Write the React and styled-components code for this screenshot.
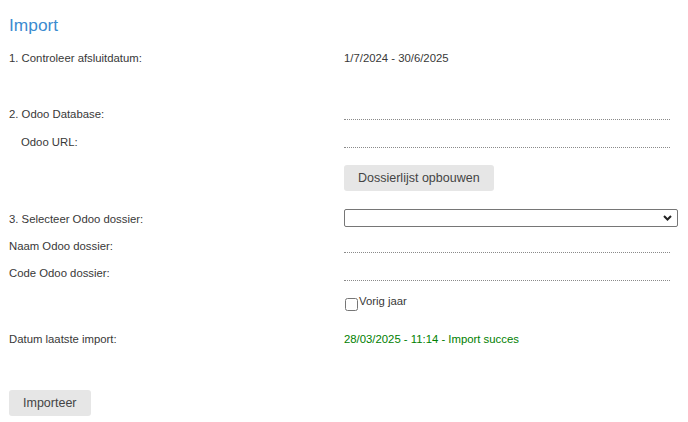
import React, { useState } from 'react';
import styled, { createGlobalStyle } from 'styled-components';

const GlobalStyle = createGlobalStyle`
  body {
    margin: 0;
    background: #fff;
    font-family: "Liberation Sans", Arial, sans-serif;
    font-size: 8.5pt;
    color: #383838;
  }
`;

const Page = styled.div`
  padding: 13px 9px 0;
  display: flex;
  flex-direction: column;
`;

const Title = styled.h2`
  margin: 0;
  font-size: 13pt;
  font-weight: normal;
  line-height: 24px;
  color: #3b8bd0;
`;

const Row = styled.div`
  display: grid;
  grid-template-columns: 335px 334px;
  align-items: start;
  margin-top: ${(p) => p.$mt || 0}px;
`;

const Label = styled.div`
  line-height: 16px;
  padding-left: ${(p) => (p.$indent ? 12 : 0)}px;
  padding-top: ${(p) => p.$pt || 0}px;
`;

const Value = styled.div`
  line-height: 16px;
  color: ${(p) => (p.$success ? 'green' : '#383838')};
`;

const Field = styled.input`
  box-sizing: border-box;
  width: 326px;
  height: ${(p) => p.$h || 15}px;
  padding: 0;
  border: none;
  border-bottom: 1px dotted #8a8a8a;
  font: inherit;
  color: #333;
  background: transparent;
  outline: none;
`;

const Button = styled.button`
  height: 26px;
  padding: 0 14px;
  border: none;
  border-radius: 3px;
  background: #e6e6e6;
  color: #444;
  font-family: "Liberation Sans", Arial, sans-serif;
  font-size: 12.5px;
  cursor: pointer;
  justify-self: start;

  &:hover {
    background: #dcdcdc;
  }
`;

const SelectWrap = styled.div`
  position: relative;
  width: 334px;
  height: 18px;
`;

const Select = styled.select`
  appearance: none;
  box-sizing: border-box;
  width: 100%;
  height: 100%;
  margin: 0;
  padding: 0 20px 0 3px;
  border: 1px solid #767676;
  border-radius: 2px;
  background: #fff;
  font: inherit;
  color: #333;
`;

const Chevron = styled.svg`
  position: absolute;
  right: 6px;
  top: 6px;
  pointer-events: none;
`;

const CheckLabel = styled.label`
  display: flex;
  align-items: flex-start;
  line-height: 16px;
`;

const Check = styled.input`
  width: 13px;
  height: 13px;
  margin: 5px 1px 0 1px;
`;

const ImportButton = styled(Button)`
  align-self: flex-start;
  margin-top: 43px;
`;

const App = () => {
  const [prevYear, setPrevYear] = useState(false);

  return (
    <Page>
      <GlobalStyle />
      <Title>Import</Title>

      <Row $mt={13}>
        <Label>1. Controleer afsluitdatum:</Label>
        <Value>1/7/2024 - 30/6/2025</Value>
      </Row>

      <Row $mt={40}>
        <Label>2. Odoo Database:</Label>
        <Field $h={14} />
      </Row>
      <Row $mt={12}>
        <Label $indent>Odoo URL:</Label>
        <Field $h={14} />
      </Row>

      <Row $mt={15}>
        <div />
        <Button>Dossierlijst opbouwen</Button>
      </Row>

      <Row $mt={18}>
        <Label $pt={2}>3. Selecteer Odoo dossier:</Label>
        <SelectWrap>
          <Select defaultValue="">
            <option value=""></option>
          </Select>
          <Chevron width="9" height="6" viewBox="0 0 9 6">
            <path d="M1 1 L4.5 4.5 L8 1" fill="none" stroke="#222" strokeWidth="2" />
          </Chevron>
        </SelectWrap>
      </Row>
      <Row $mt={11}>
        <Label>Naam Odoo dossier:</Label>
        <Field $h={15} />
      </Row>
      <Row $mt={11}>
        <Label>Code Odoo dossier:</Label>
        <Field $h={16} />
      </Row>

      <Row $mt={12}>
        <div />
        <CheckLabel>
          <Check
            type="checkbox"
            checked={prevYear}
            onChange={(e) => setPrevYear(e.target.checked)}
          />
          Vorig jaar
        </CheckLabel>
      </Row>

      <Row $mt={20}>
        <Label>Datum laatste import:</Label>
        <Value $success>28/03/2025 - 11:14 - Import succes</Value>
      </Row>

      <ImportButton>Importeer</ImportButton>
    </Page>
  );
};

export default App;
